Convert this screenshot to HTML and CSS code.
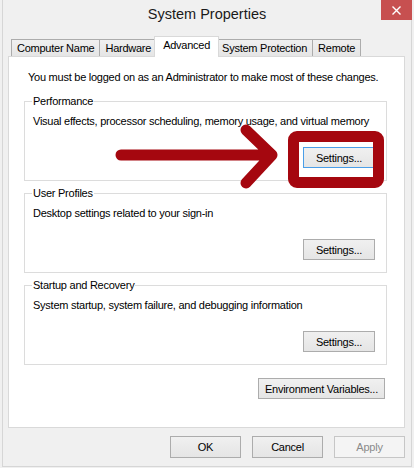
FILE: index.html
```html
<!DOCTYPE html>
<html>
<head>
    <title>System Properties</title>
    <link rel="stylesheet" href="styles.css">
</head>
<body>
    <div class="window">
        <div class="titlebar">
            <span class="title">System Properties</span>
            <div class="close">
                <svg width="9" height="9" viewBox="0 0 9 9"><path d="M0.5 0.5 L8.5 8.5 M8.5 0.5 L0.5 8.5" stroke="#fff" stroke-width="1.4"/></svg>
            </div>
        </div>

        <div class="tabs">
            <div class="tab">Computer Name</div>
            <div class="tab">Hardware</div>
            <div class="tab active">Advanced</div>
            <div class="tab">System Protection</div>
            <div class="tab">Remote</div>
        </div>

        <div class="panel">
            <p class="note">You must be logged on as an Administrator to make most of these changes.</p>

            <fieldset class="group">
                <legend>Performance</legend>
                <p>Visual effects, processor scheduling, memory usage, and virtual memory</p>
                <div class="actions"><button class="btn settings default">Settings...</button></div>
            </fieldset>

            <fieldset class="group">
                <legend>User Profiles</legend>
                <p>Desktop settings related to your sign-in</p>
                <div class="actions"><button class="btn settings">Settings...</button></div>
            </fieldset>

            <fieldset class="group">
                <legend>Startup and Recovery</legend>
                <p>System startup, system failure, and debugging information</p>
                <div class="actions"><button class="btn settings">Settings...</button></div>
            </fieldset>

            <div class="actions env"><button class="btn">Environment Variables...</button></div>
        </div>

        <div class="footer">
            <button class="btn">OK</button>
            <button class="btn">Cancel</button>
            <button class="btn" disabled>Apply</button>
        </div>

        <!-- red annotation drawn over the dialog -->
        <div class="highlight"></div>
        <svg class="arrow" width="414" height="468" viewBox="0 0 414 468">
            <path d="M121 155 H272 M246 130 L272 155 L246 183" fill="none" stroke="#a5070f" stroke-width="11" stroke-linecap="round" stroke-linejoin="round"/>
        </svg>
    </div>
</body>
</html>
```

FILE: styles.css
```css
body {
    margin: 0;
    background: #f0f0f0;
    font-family: "Liberation Sans", Arial, sans-serif;
    font-size: 11px;
    letter-spacing: -0.25px;
    color: #000;
}

.window {
    position: relative;
    width: 410px;
    height: 467px;
    margin: 0 2px;
    box-sizing: border-box;
    border: 1px solid #d6d6d6;
    border-top: none;
    background: #f0f0f0;
}

.titlebar {
    height: 36px;
    text-align: center;
}

.title {
    font-size: 14.5px;
    line-height: 28px;
    letter-spacing: 0;
    color: #1a1a1a;
}

.close {
    position: absolute;
    top: 0;
    right: -1px;
    width: 31px;
    height: 20px;
    background: #c75050;
    display: flex;
    align-items: center;
    justify-content: center;
}

.tabs {
    position: relative;
    z-index: 1;
    display: flex;
    align-items: flex-end;
    height: 21px;
    padding-left: 9px;
    margin-bottom: -1px;
}

.tab {
    height: 17px;
    box-sizing: border-box;
    margin: 0 0 1px -1px;
    padding: 0 5px;
    line-height: 16px;
    white-space: nowrap;
    border: 1px solid #acacac;
    border-bottom: none;
    background: linear-gradient(#f0f0f0, #e5e5e5);
}

.tab.active {
    position: relative;
    z-index: 2;
    height: 21px;
    margin: 0 -2px 0 -3px;
    padding: 0 8px 3px;
    line-height: 17px;
    border-color: #d9d9d9;
    background: #fff;
}

.panel {
    height: 372px;
    box-sizing: border-box;
    margin: 0 6px 0 5px;
    padding: 12px 17px 0 15px;
    background: #fff;
    border: 1px solid #d9d9d9;
}

.note {
    margin: 0 0 8px 4px;
    line-height: 16px;
    white-space: nowrap;
}

.group {
    margin: 4px 0 0;
    padding: 0 11px 12px 7px;
    border: 1px solid #dcdcdc;
    min-width: 0;
}

.group:first-of-type {
    margin-top: 0;
}

.group legend {
    padding: 0 1px;
    line-height: 16px;
}

.group p {
    margin: 4px 0 0 1px;
    line-height: 16px;
    white-space: nowrap;
}

.actions {
    display: flex;
    justify-content: flex-end;
    margin-top: 18px;
}

.actions.env {
    margin: 13px 2px 0 0;
}

.actions.env .btn {
    padding: 0 6px;
}

.btn {
    height: 21px;
    min-width: 71px;
    padding: 0 9px;
    font-family: inherit;
    font-size: 11px;
    letter-spacing: -0.25px;
    color: #000;
    border: 1px solid #acacac;
    background: linear-gradient(#f0f0f0, #e5e5e5);
}

.btn.settings {
    width: 72px;
}

.btn.default {
    border-color: #4a9ee8;
}

.btn:disabled {
    color: #8a8a8a;
    border-color: #c6c6c6;
    background: #f4f4f4;
}

.footer {
    display: flex;
    justify-content: flex-end;
    gap: 11px;
    margin-top: 8px;
    padding-right: 6px;
}

.footer .btn {
    height: 22px;
}

.highlight {
    position: absolute;
    left: 285px;
    top: 131px;
    width: 96px;
    height: 57px;
    box-sizing: border-box;
    border: 11px solid #a5070f;
    border-radius: 9px;
}

.arrow {
    position: absolute;
    left: -3px;
    top: 0;
}
```
